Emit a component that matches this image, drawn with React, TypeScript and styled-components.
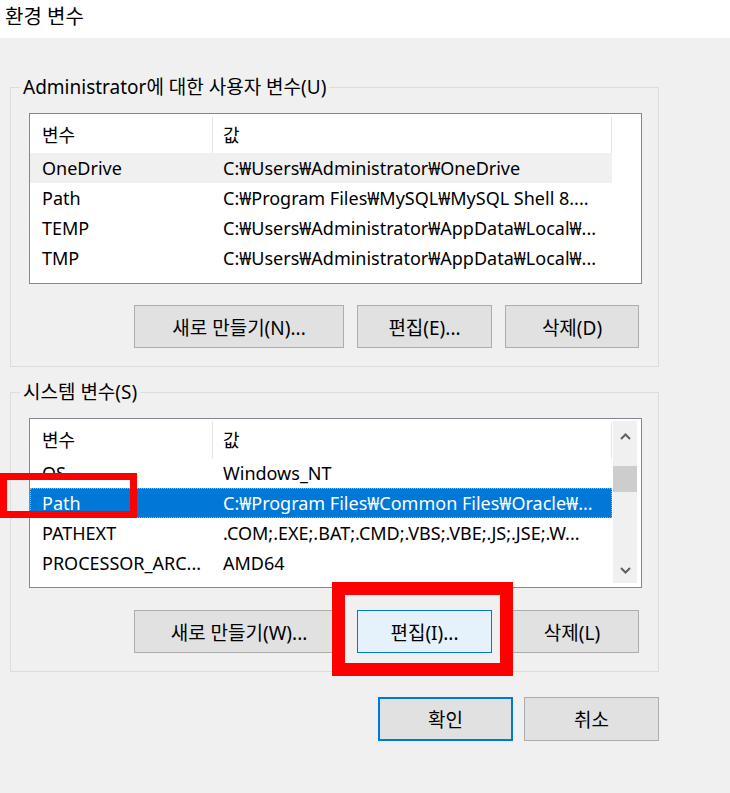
import React from "react";
import styled, { createGlobalStyle } from "styled-components";

const Global = createGlobalStyle`
  html, body { margin: 0; padding: 0; background: #f0f0f0; }
  body {
    font-family: "Noto Sans", "Noto Sans CJK KR", sans-serif;
    color: #000;
  }
  * { box-sizing: border-box; }
`;

const Page = styled.div`
  position: relative;
  width: 730px;
  height: 793px;
  overflow: hidden;
  background: #f0f0f0;
`;

const TitleBar = styled.div`
  height: 38px;
  background: #fff;
  padding-left: 5px;
  font-size: 20px;
  line-height: 34px;
`;

const Content = styled.div`
  display: flex;
  flex-direction: column;
  padding: 38px 0 0 10px;
`;

const Group = styled.fieldset<{ $mt?: number }>`
  margin: ${(p) => p.$mt ?? 0}px 0 0 0;
  padding: 15px 16px 18px 18px;
  width: 649px;
  min-width: 0;
  border: 1px solid #dcdcdc;
`;

const Legend = styled.legend`
  margin-left: -9px;
  padding: 0 3px;
  font-size: 19px;
  line-height: 22px;
`;

const List = styled.div<{ $h: number }>`
  display: flex;
  width: 613px;
  height: ${(p) => p.$h}px;
  border: 1px solid #828790;
  background: #fff;
  overflow: hidden;
`;

const Pane = styled.div`
  width: 582px;
  flex: none;
  display: flex;
  flex-direction: column;
`;

const Header = styled.div`
  display: flex;
  height: 39px;
  flex: none;
`;

const HeaderCell = styled.div<{ $w: number; $pl: number }>`
  width: ${(p) => p.$w}px;
  padding-left: ${(p) => p.$pl}px;
  margin-top: 3px;
  border-right: 1px solid #e5e5e5;
  font-size: 18px;
  line-height: 36px;
  white-space: nowrap;
`;

const Row = styled.div<{ $state?: "hover" | "selected" }>`
  display: flex;
  height: 30px;
  flex: none;
  background: ${(p) =>
    p.$state === "selected" ? "#0078d7" : p.$state === "hover" ? "#f0f0f0" : "transparent"};
  color: ${(p) => (p.$state === "selected" ? "#fff" : "#000")};
  outline: ${(p) => (p.$state === "selected" ? "1px dotted #f0a040" : "none")};
  outline-offset: -1px;
`;

const Cell = styled.div<{ $w?: number; $pl: number }>`
  width: ${(p) => (p.$w ? `${p.$w}px` : "auto")};
  flex: ${(p) => (p.$w ? "none" : "1")};
  padding-left: ${(p) => p.$pl}px;
  font-size: 18px;
  line-height: 30px;
  white-space: nowrap;
  overflow: hidden;
`;

const Scrollbar = styled.div`
  width: 24px;
  margin: 2px 4px 4px 1px;
  background: #f0f0f0;
  display: flex;
  flex-direction: column;
`;

const ArrowBox = styled.div<{ $h: number }>`
  height: ${(p) => p.$h}px;
  display: flex;
  align-items: center;
  justify-content: center;
  flex: none;
`;

const Track = styled.div`
  flex: 1;
  padding-top: 15px;
`;

const Thumb = styled.div`
  height: 26px;
  background: #cdcdcd;
`;

const ButtonRow = styled.div<{ $mt: number }>`
  display: flex;
  justify-content: flex-end;
  gap: 13px;
  margin-top: ${(p) => p.$mt}px;
  padding-right: 3px;
`;

const Button = styled.button<{ $w: number; $variant?: "focus" | "primary" }>`
  width: ${(p) => p.$w}px;
  height: 43px;
  padding: 0;
  font-family: inherit;
  font-size: 19px;
  color: #000;
  background: ${(p) => (p.$variant === "focus" ? "#e5f1fb" : "#e1e1e1")};
  border: ${(p) =>
    p.$variant === "focus"
      ? "1px solid #0078d7"
      : p.$variant === "primary"
      ? "2px solid #0078d7"
      : "1px solid #adadad"};
  white-space: nowrap;
`;

const Footer = styled.div`
  display: flex;
  justify-content: flex-end;
  gap: 11px;
  width: 649px;
  margin-top: 25px;
`;

const FooterButton = styled(Button)`
  height: 44px;
`;

const Highlight = styled.div<{ $x: number; $y: number; $w: number; $h: number; $t: number }>`
  position: absolute;
  left: ${(p) => p.$x}px;
  top: ${(p) => p.$y}px;
  width: ${(p) => p.$w}px;
  height: ${(p) => p.$h}px;
  border: ${(p) => p.$t}px solid #ff0000;
  pointer-events: none;
`;

const Chevron = ({ up }: { up?: boolean }) => (
  <svg width="11" height="7" viewBox="0 0 11 7">
    <polyline
      points={up ? "1,6 5.5,1.5 10,6" : "1,1 5.5,5.5 10,1"}
      fill="none"
      stroke="#606060"
      strokeWidth="2"
    />
  </svg>
);

type Item = { name: string; value: string; state?: "hover" | "selected" };

const userVars: Item[] = [
  { name: "OneDrive", value: "C:₩Users₩Administrator₩OneDrive", state: "hover" },
  { name: "Path", value: "C:₩Program Files₩MySQL₩MySQL Shell 8...." },
  { name: "TEMP", value: "C:₩Users₩Administrator₩AppData₩Local₩..." },
  { name: "TMP", value: "C:₩Users₩Administrator₩AppData₩Local₩..." },
];

const sysVars: Item[] = [
  { name: "OS", value: "Windows_NT" },
  { name: "Path", value: "C:₩Program Files₩Common Files₩Oracle₩...", state: "selected" },
  { name: "PATHEXT", value: ".COM;.EXE;.BAT;.CMD;.VBS;.VBE;.JS;.JSE;.W..." },
  { name: "PROCESSOR_ARC...", value: "AMD64" },
];

const VarList = ({ items, h, scroll }: { items: Item[]; h: number; scroll?: boolean }) => (
  <List $h={h}>
    <Pane>
      <Header>
        <HeaderCell $w={183} $pl={12}>변수</HeaderCell>
        <HeaderCell $w={399} $pl={10}>값</HeaderCell>
      </Header>
      {items.map((it) => (
        <Row key={it.name + it.value} $state={it.state}>
          <Cell $w={183} $pl={12}>{it.name}</Cell>
          <Cell $pl={10}>{it.value}</Cell>
        </Row>
      ))}
    </Pane>
    {scroll && (
      <Scrollbar>
        <ArrowBox $h={30}>
          <Chevron up />
        </ArrowBox>
        <Track>
          <Thumb />
        </Track>
        <ArrowBox $h={25}>
          <Chevron />
        </ArrowBox>
      </Scrollbar>
    )}
  </List>
);

export default function App() {
  return (
    <Page>
      <Global />
      <TitleBar>환경 변수</TitleBar>
      <Content>
        <Group>
          <Legend>Administrator에 대한 사용자 변수(U)</Legend>
          <VarList items={userVars} h={171} />
          <ButtonRow $mt={21}>
            <Button $w={210}>새로 만들기(N)...</Button>
            <Button $w={135}>편집(E)...</Button>
            <Button $w={134}>삭제(D)</Button>
          </ButtonRow>
        </Group>
        <Group $mt={14}>
          <Legend>시스템 변수(S)</Legend>
          <VarList items={sysVars} h={170} scroll />
          <ButtonRow $mt={22}>
            <Button $w={210}>새로 만들기(W)...</Button>
            <Button $w={135} $variant="focus">편집(I)...</Button>
            <Button $w={134}>삭제(L)</Button>
          </ButtonRow>
        </Group>
        <Footer>
          <FooterButton $w={135} $variant="primary">확인</FooterButton>
          <FooterButton $w={135}>취소</FooterButton>
        </Footer>
      </Content>
      <Highlight $x={0} $y={473} $w={137} $h={45} $t={7} />
      <Highlight $x={332} $y={582} $w={181} $h={94} $t={13} />
    </Page>
  );
}
